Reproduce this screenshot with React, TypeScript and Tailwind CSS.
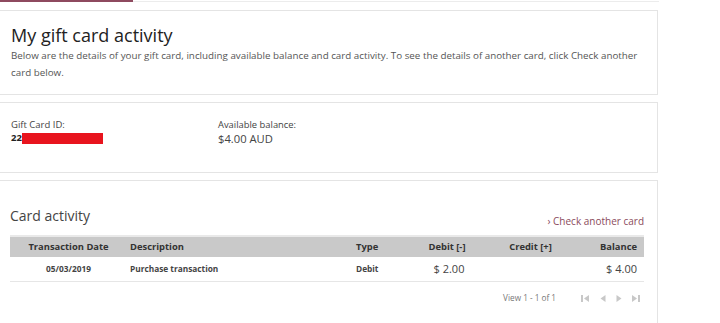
import React from 'react';

const font = { fontFamily: '"Open Sans", "Noto Sans", sans-serif' };

const PagerIcon = ({ kind }: { kind: 'first' | 'prev' | 'next' | 'last' }) => {
  if (kind === 'first')
    return (
      <svg width="9" height="7" viewBox="0 0 9 7" className="fill-[#c8c8c8]">
        <rect x="0" y="0" width="2" height="7" />
        <polygon points="8,0 3,3.5 8,7" />
      </svg>
    );
  if (kind === 'prev')
    return (
      <svg width="6" height="7" viewBox="0 0 6 7" className="fill-[#c8c8c8]">
        <polygon points="5.5,0 0.5,3.5 5.5,7" />
      </svg>
    );
  if (kind === 'next')
    return (
      <svg width="6" height="7" viewBox="0 0 6 7" className="fill-[#c8c8c8]">
        <polygon points="0.5,0 5.5,3.5 0.5,7" />
      </svg>
    );
  return (
    <svg width="8" height="7" viewBox="0 0 8 7" className="fill-[#c8c8c8]">
      <polygon points="0,0 5,3.5 0,7" />
      <rect x="6" y="0" width="2" height="7" />
    </svg>
  );
};

const cols = 'grid grid-cols-[115px_226px_60px_72px_95px_1fr]';

export default function App() {
  return (
    <div className="w-[720px] h-[323px] overflow-hidden bg-white text-[#333]" style={font}>
      {/* top tab strip */}
      <div className="flex w-[659px] h-[3px] items-start">
        <div className="w-[133px] h-[2px] bg-[#8e4a5f]" />
        <div className="flex-1 h-[2px] border-b border-[#ececec]" />
      </div>

      <div className="flex flex-col gap-[7px] w-[659px] pt-[7px] -ml-px">
        {/* intro */}
        <section className="border border-[#e4e4e4] h-[85px] pl-[11px] pr-[8px] pt-[12px]">
          <h1 className="text-[18px] leading-[24px] text-[#222]">My gift card activity</h1>
          <p className="text-[9.8px] leading-[17px] text-[#555]">
            Below are the details of your gift card, including available balance and card activity. To see the details of another card, click Check another card below.
          </p>
        </section>

        {/* card summary */}
        <section className="border border-[#e4e4e4] h-[71px] pl-[11px] pt-[15px] flex">
          <div className="w-[207px]">
            <div className="text-[9.5px] leading-[13px] text-[#444]">Gift Card ID:</div>
            <div className="flex items-center h-[14px]">
              <span className="text-[9.5px] font-bold text-[#222]">22</span>
              <span className="w-[81px] h-[11px] bg-[#e8141e]" />
            </div>
          </div>
          <div>
            <div className="text-[9.4px] leading-[13px] text-[#444]">Available balance:</div>
            <div className="text-[11.2px] leading-[16px] text-[#444]">$4.00 AUD</div>
          </div>
        </section>

        {/* activity */}
        <section className="border border-[#e4e4e4] h-[160px] pl-[10px] pr-[13px] pt-[25px]">
          <div className="flex items-end justify-between">
            <h2 className="text-[14px] leading-[20px] text-[#444]">Card activity</h2>
            <a className="text-[10px] leading-[16px] text-[#8a4a5c] -mb-[3px]">› Check another card</a>
          </div>
          <div className="mt-[9px] border-t-2 border-[#e9e9e9]">
            <div className={`${cols} h-[20px] items-center bg-[#c9c9c9] text-[9.4px] font-bold text-[#333]`}>
              <div className="text-center pl-[2px]">Transaction Date</div>
              <div className="pl-[5px]">Description</div>
              <div className="pl-[5px]">Type</div>
              <div className="text-center">Debit [-]</div>
              <div className="text-center">Credit [+]</div>
              <div className="text-right pr-[7px]">Balance</div>
            </div>
            <div className={`${cols} h-[25px] items-center border-b border-[#e6e6e6] text-[#444]`}>
              <div className="text-center pl-[2px] text-[8.3px] font-bold">05/03/2019</div>
              <div className="pl-[5px] text-[8.3px] font-bold">Purchase transaction</div>
              <div className="pl-[5px] text-[8.3px] font-bold">Debit</div>
              <div className="text-center text-[11px] pl-[4px]">$ 2.00</div>
              <div />
              <div className="text-right pr-[7px] text-[11px]">$ 4.00</div>
            </div>
            <div className="flex items-center justify-end h-[32px] pr-[4px]">
              <span className="text-[8.2px] text-[#777] mr-[25px]">View 1 - 1 of 1</span>
              <div className="flex items-center gap-[10px]">
                <PagerIcon kind="first" />
                <PagerIcon kind="prev" />
                <PagerIcon kind="next" />
                <PagerIcon kind="last" />
              </div>
            </div>
          </div>
        </section>
      </div>
    </div>
  );
}
